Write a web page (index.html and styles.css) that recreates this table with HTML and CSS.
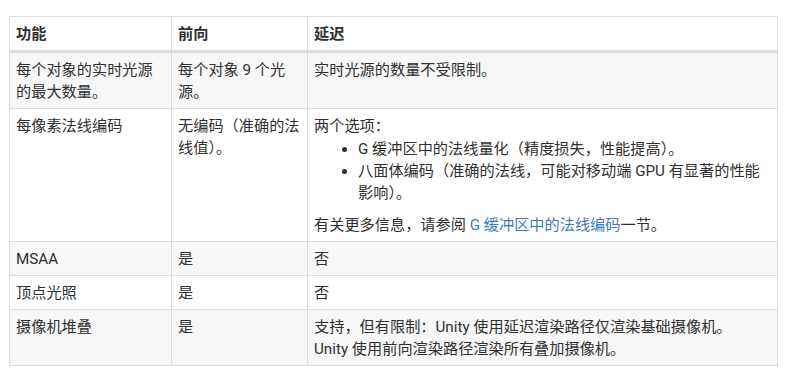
FILE: index.html
```html
<!DOCTYPE html>
<html lang="zh-CN">
<head>
<meta charset="utf-8">
<title>功能对比</title>
<link rel="stylesheet" href="styles.css">
</head>
<body>
<table class="cmp">
  <colgroup>
    <col class="c1">
    <col class="c2">
    <col class="c3">
  </colgroup>
  <thead>
    <tr><th>功能</th><th>前向</th><th>延迟</th></tr>
  </thead>
  <tbody>
    <tr>
      <td>每个对象的实时光源的最大数量。</td>
      <td>每个对象 9 个光源。</td>
      <td>实时光源的数量不受限制。</td>
    </tr>
    <tr>
      <td>每像素法线编码</td>
      <td>无编码（准确的法线值）。</td>
      <td>
        <p class="p">两个选项：</p>
        <ul class="list">
          <li>G 缓冲区中的法线量化（精度损失，性能提高）。</li>
          <li>八面体编码（准确的法线，可能对移动端 GPU 有显著的性能影响）。</li>
        </ul>
        <p class="p">有关更多信息，请参阅 <a class="link" href="#">G 缓冲区中的法线编码</a>一节。</p>
      </td>
    </tr>
    <tr><td>MSAA</td><td>是</td><td>否</td></tr>
    <tr><td>顶点光照</td><td>是</td><td>否</td></tr>
    <tr>
      <td>摄像机堆叠</td>
      <td>是</td>
      <td>支持，但有限制：Unity 使用延迟渲染路径仅渲染基础摄像机。<br>Unity 使用前向渲染路径渲染所有叠加摄像机。</td>
    </tr>
  </tbody>
</table>
</body>
</html>
```
FILE: styles.css
```css
html, body {
  background: #ffffff;
}
body {
  margin: 16px 0 0 9px;
  font-family: Roboto, "Noto Sans CJK SC", sans-serif;
  font-size: 15.2px;
  line-height: 22px;
  color: #303030;
}
.cmp {
  border-collapse: collapse;
  table-layout: fixed;
  width: 769px;
}
.c1 { width: 162px; }
.c2 { width: 136px; }
.c3 { width: auto; }
.cmp th,
.cmp td {
  border: 1px solid #dddddd;
  padding: 6px 6px 5px 6px;
  text-align: left;
  vertical-align: top;
}
.cmp th {
  font-weight: bold;
  border-bottom: 3px solid #dddddd;
  background: #ffffff;
}
.cmp tbody tr:nth-child(odd) td {
  background: #f7f7f7;
}
.cmp tbody tr:nth-child(even) td {
  background: #ffffff;
}
.p {
  margin: 0;
}
.list {
  margin: 1px 0 10px 0;
  padding-left: 44px;
}
.link {
  color: #3b7cc0;
  text-decoration: none;
}
```
